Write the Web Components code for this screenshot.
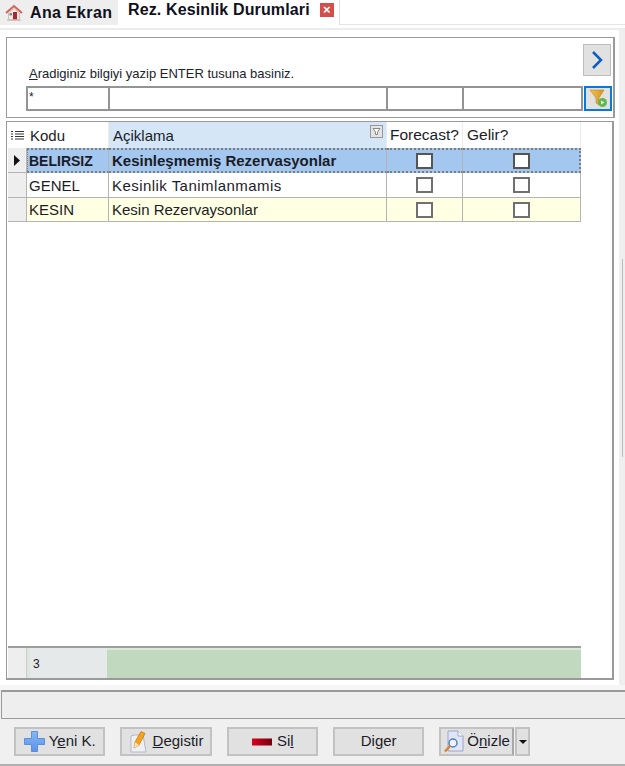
<!DOCTYPE html>
<html lang="tr">
<head>
<meta charset="utf-8">
<title>Rez. Kesinlik Durumlari</title>
<style>
  html, body { margin: 0; padding: 0; }
  body {
    width: 625px;
    height: 766px;
    overflow: hidden;
    display: flex;
    flex-direction: column;
    background: #fff;
    color: #1c1c28;
    font-family: "Liberation Sans", Arial, sans-serif;
  }
</style>
</head>
<body>
<erp-tabs></erp-tabs>
<erp-content>
  <erp-search></erp-search>
  <erp-grid></erp-grid>
</erp-content>
<erp-footer>
  <erp-button style="--w:91.33px"><svg slot="icon" width="21" height="21" viewBox="0 0 21 21"><defs><linearGradient id="b" x1="0" y1="0" x2="0" y2="1"><stop offset="0" stop-color="#86b8f5"/><stop offset="1" stop-color="#5b93e8"/></linearGradient></defs><path d="M7.500 .5h6v7h7v6h-7v7h-6v-7h-7v-6h7z" fill="url(#b)" stroke="#5a8fe0"/></svg>Y<u>e</u>ni K.</erp-button>
  <erp-button style="--w:91.33px"><svg slot="icon" width="20" height="23" viewBox="0 0 20 23"><path d="M2 6l3-1h9l3 17H2z" fill="#eef0f5" stroke="#b4b8c4"/><path d="M5 18l1-6 6-10.500 4 2L10 15z" fill="#f3a31c" stroke="#c97c0e" stroke-width=".8"/><path d="M5 18l1-6 4 3z" fill="#f9e3b8"/></svg><u>D</u>egistir</erp-button>
  <erp-button style="--w:91.33px"><svg slot="icon" width="22" height="8" viewBox="0 0 22 8"><defs><linearGradient id="r"><stop offset="0" stop-color="#d8001c"/><stop offset="1" stop-color="#780010"/></linearGradient></defs><rect width="20" height="7" x="1" y=".5" fill="url(#r)"/></svg>Si<u>l</u></erp-button>
  <erp-button style="--w:91.33px">Di<u>g</u>er</erp-button>
  <erp-button style="--w:75px" split><svg slot="icon" width="20" height="23" viewBox="0 0 20 23"><path d="M4 1h10l5 5v15H4z" fill="#dfe6f7" stroke="#9aa6cc"/><path d="M14 1v5h5" fill="#fff" stroke="#9aa6cc"/><circle cx="9" cy="13" r="4" fill="#eef4ff" stroke="#5b7fb8" stroke-width="1.500"/><path d="M6 16l-5 5.500" stroke="#d9822b" stroke-width="2.500"/></svg>Ö<u>n</u>izle</erp-button>
</erp-footer>

<script>
class ErpTabs extends HTMLElement {
  constructor() {
    super();
    this.attachShadow({ mode: "open" }).innerHTML = `
      <style>
        :host { display: block; height: 30px; font: bold 16px "Liberation Sans", Arial, sans-serif; color: #10101c; }
        .row { display: flex; height: 25px; }
        .tab { display: flex; align-items: center; height: 25px; box-sizing: border-box; }
        .home { width: 118px; background: #eeeeee; padding-left: 5px; gap: 7px; letter-spacing: .35px; }
        .active { width: 221px; margin-left: 1px; padding-left: 9px; letter-spacing: .13px; border-right: 1px solid #e2e2e2; }
        .active span { margin-top: -5px; }
        .close { width: 14px; height: 14px; margin: -5px 0 0 10px; background: #d2504c; color: #fff;
                 font-size: 13px; line-height: 14px; text-align: center; letter-spacing: 0; }
        .fill { flex: 1; border-bottom: 1px solid #e4e4e4; }
        .line { height: 2px; margin-top: 3px; background: #ececec; }
      </style>
      <div class="row">
        <div class="tab home">
          <svg width="18" height="18" viewBox="0 0 18 18">
            <path d="M1 9l8-7 8 7" fill="none" stroke="#d9635a" stroke-width="2"/>
            <path d="M3.500 9v6.500h11V9L9 4.500z" fill="#f0ebe6" stroke="#c9c0b8"/>
            <rect x="8" y="8" width="4" height="7.500" fill="#b3242c"/>
            <rect x="4.500" y="9" width="2.500" height="2.500" fill="#7a8aa0"/>
            <rect x="2" y="15.500" width="14" height="1.500" fill="#cfc8c0"/>
          </svg>
          <span>Ana Ekran</span>
        </div>
        <div class="tab active"><span>Rez. Kesinlik Durumlari</span><div class="close">×</div></div>
        <div class="fill"></div>
      </div>
      <div class="line"></div>`;
  }
}

class ErpContent extends HTMLElement {
  constructor() {
    super();
    this.attachShadow({ mode: "open" }).innerHTML = `
      <style>
        :host { display: flex; height: 655px; box-sizing: border-box; }
        .main { width: 619px; padding: 7px 4px 0 6px; box-sizing: border-box;
                display: flex; flex-direction: column; gap: 3px; }
        .strip { flex: 1; background: #efefef; padding: 229px 0 0 3px; box-sizing: border-box; }
        .edge { width: 1px; height: 198px; background: #bcbcbc; }
      </style>
      <div class="main"><slot></slot></div>
      <div class="strip"><div class="edge"></div></div>`;
  }
}

class ErpSearch extends HTMLElement {
  constructor() {
    super();
    this.attachShadow({ mode: "open" }).innerHTML = `
      <style>
        :host { display: block; height: 81px; box-sizing: border-box; border: 1px solid #9a9a9a;
                border-width: 1px 2px 1px 1px; padding: 6px 0 0 19px; }
        .top { display: flex; justify-content: flex-end; height: 32px; padding-right: 2px; }
        .icon-btn { width: 28px; height: 32px; box-sizing: border-box; background: #e1e1e1; border: 1px solid #bdbdbd;
                    display: flex; align-items: center; justify-content: center; }
        .label { font-size: 13px; line-height: 16px; height: 20px; margin: -10px 0 0 3px; color: #22222c; }
        .row { display: grid; grid-template-columns: 82px 278px 76px 119px 28px; height: 25px; }
        .cell { border: 2px solid #949494; background: #fff; box-sizing: border-box;
                font-size: 12px; line-height: 14px; padding: 2px 1px; margin-right: -2px; }
        .filter { width: 28px; height: 25px; margin-left: 3px; box-sizing: border-box; border: 2px solid #0a78d7; background: #e1e1e1;
                  display: flex; align-items: center; justify-content: center; }
      </style>
      <div class="top">
        <div class="icon-btn"><svg width="14" height="20" viewBox="0 0 14 20"><path d="M3 2l8 8-8 8" fill="none" stroke="#0b5cc4" stroke-width="2.500"/></svg></div>
      </div>
      <div class="label"><u>A</u>radiginiz bilgiyi yazip ENTER tusuna basiniz.</div>
      <div class="row">
        <div class="cell">*</div><div class="cell"></div><div class="cell"></div><div class="cell"></div>
        <div class="filter"><svg width="21" height="21" viewBox="0 0 21 21">
          <defs><linearGradient id="f"><stop offset="0" stop-color="#f1c25a"/><stop offset="1" stop-color="#d3921f"/></linearGradient></defs>
          <path d="M2 2h14l-5 8v7l-3-2v-5z" fill="url(#f)" stroke="#c48a1e" stroke-width=".6"/>
          <circle cx="14.500" cy="14.500" r="4.500" fill="#62b84f"/><path d="M13 12.500v4l3.500-2z" fill="#e8f6e0"/>
        </svg></div>
      </div>`;
  }
}

class ErpGrid extends HTMLElement {
  constructor() {
    super();
    const rows = [
      { kod: "BELIRSIZ", desc: "Kesinleşmemiş Rezervasyonlar", cls: "sel" },
      { kod: "GENEL", desc: "Kesinlik Tanimlanmamis", cls: "wide" },
      { kod: "KESIN", desc: "Kesin Rezervaysonlar", cls: "alt" },
    ];
    const check = `<div class="chk"></div>`;
    this.attachShadow({ mode: "open" }).innerHTML = `
      <style>
        :host { display: flex; flex-direction: column; flex: 1; margin: 0 1px 5px 0; box-sizing: border-box;
                border: 1px solid #9a9a9a; border-width: 1px 2px 2px 1px; background: #fff; padding-left: 1px;
                font-size: 15px; color: #1c1c28; }
        .row { display: grid; grid-template-columns: 19px 82px 278px 76px 118px; width: 573px; }
        .head { height: 26px; }
        .head > div { display: flex; align-items: center; padding: 0 0 0 3px; border-right: 1px solid #ececec; box-sizing: border-box; }
        .head .sorted { background: #d5e7f7; justify-content: space-between; padding: 0 3px 0 4px; }
        .head .sorted svg { align-self: flex-start; margin-top: 3px; }
        .head .gelir { padding-left: 4px; }
        .head .ind { padding: 0 0 0 3px; border: 0; }
        .head .f { font-size: 15.500px; }
        .body { flex: 1; }
        .data { height: 25px; box-sizing: border-box; }
        .data:last-child { height: 24px; }
        .data > div { display: flex; align-items: center; box-sizing: border-box; border-right: 1px solid #b4b4b4;
                      border-bottom: 1px solid #b4b4b4; padding-left: 3px; white-space: nowrap; }
        .data .kod { padding-left: 2px; }
        .data .ind { background: #eeeeee; padding-left: 6px; }
        .data .mid { justify-content: center; padding: 0; }
        .data .mid.first { padding-right: 1px; }
        .alt > div:not(.ind) { background: #ffffe3; }
        .wide .desc { letter-spacing: .45px; }
        .sel .kod { font-size: 14px; padding-left: 1px; }
        .sel { font-weight: bold; }
        .sel > div:not(.ind) { background: #a3c7ee; border-top: 2px dotted #7d7d7d; border-bottom: 2px dotted #7d7d7d; }
        .sel > div:last-child { border-right: 2px dotted #7d7d7d; }
        .sel > .kod { border-left: 1px dotted #7d7d7d; }
        .chk { width: 17px; height: 16px; box-sizing: border-box; background: #fff; border: 2px solid #707070; }
        .sel .chk { border-color: #555; }
        .total { height: 32px; border-top: 2px solid #9e9e9e; box-sizing: border-box; display: grid;
                 grid-template-columns: 19px 3px 77px 474px; width: 573px; }
        .total .ind { background: #eeeeee; border-right: 1px solid #ccc; }
        .total .pad { background: #dce8dc; }
        .total .num { background: #e6e9ea; font-size: 12px; display: flex; align-items: center; padding: 1px 0 0 3px; }
        .total .sum { background: #c1dabf; border-top: 2px solid #dbe9d8; }
      </style>
      <div class="row head">
        <div class="ind"><svg width="13" height="11" viewBox="0 0 13 11"><path d="M0 1.500h2M4 1.500h9M0 4h2M4 4h9M0 6.500h2M4 6.500h9M0 9h2M4 9h9" stroke="#333" stroke-width="1"/></svg></div>
        <div>Kodu</div>
        <div class="sorted">Açiklama<svg width="13" height="13" viewBox="0 0 13 13"><rect x=".5" y=".5" width="12" height="12" fill="#e4e4e4" stroke="#999"/><path d="M3 3.500h7L7.500 7v2.500h-2V7z" fill="#fff" stroke="#888"/></svg></div>
        <div class="f">Forecast?</div>
        <div class="f gelir">Gelir?</div>
      </div>
      <div class="body">
        ${rows.map((r) => `
          <div class="row data ${r.cls}">
            <div class="ind">${r.cls === "sel" ? `<svg width="7" height="11" viewBox="0 0 7 11"><path d="M0 0l6 5.500L0 11z" fill="#111"/></svg>` : ""}</div>
            <div class="kod">${r.kod}</div><div class="desc">${r.desc}</div>
            <div class="mid first">${check}</div><div class="mid">${check}</div>
          </div>`).join("")}
      </div>
      <div class="total">
        <div class="ind"></div><div class="pad"></div><div class="num">3</div><div class="sum"></div>
      </div>`;
  }
}

class ErpFooter extends HTMLElement {
  constructor() {
    super();
    this.attachShadow({ mode: "open" }).innerHTML = `
      <style>
        :host { display: block; flex: 1; box-sizing: border-box; background: #f0f0f0; border-bottom: 2px solid #b0b0b0; }
        .gap { height: 5px; background: #f6f6f6; }
        .status { height: 29px; margin-left: 1px; box-sizing: border-box; border: 1px solid #9a9a9a; border-width: 2px 0 1px 1px; background: #eeeeee; }
        .bar { display: flex; gap: 15px; padding: 8px 0 0 14px; }
      </style>
      <div class="gap"></div>
      <div class="status"></div>
      <div class="bar"><slot></slot></div>`;
  }
}

class ErpButton extends HTMLElement {
  constructor() {
    super();
    this.attachShadow({ mode: "open" }).innerHTML = `
      <style>
        :host { display: flex; height: 29px; font-size: 15px; color: #1c1c28; }
        .btn { width: var(--w); height: 29px; box-sizing: border-box; background: #e1e1e1; border: 2px solid #c2c2c2;
               display: flex; align-items: center; justify-content: center; gap: 4px; }
        .btn span { margin-top: -2px; }
        :host([split]) .btn { border-right-color: #a8a8a8; gap: 3px; justify-content: flex-start; padding-left: 3px; }
        .arrow { display: none; width: 15px; height: 29px; box-sizing: border-box; background: #e1e1e1; border: 2px solid #c2c2c2;
                 align-items: center; justify-content: center; margin-left: 1px; }
        :host([split]) .arrow { display: flex; }
        .arrow::after { content: ""; border: 4px solid transparent; border-top: 4px solid #111; border-bottom: 0; }
        ::slotted(svg) { display: block; }
      </style>
      <div class="btn"><slot name="icon"></slot><span><slot></slot></span></div>
      <div class="arrow"></div>`;
  }
}

customElements.define("erp-tabs", ErpTabs);
customElements.define("erp-content", ErpContent);
customElements.define("erp-search", ErpSearch);
customElements.define("erp-grid", ErpGrid);
customElements.define("erp-footer", ErpFooter);
customElements.define("erp-button", ErpButton);
</script>
</body>
</html>
